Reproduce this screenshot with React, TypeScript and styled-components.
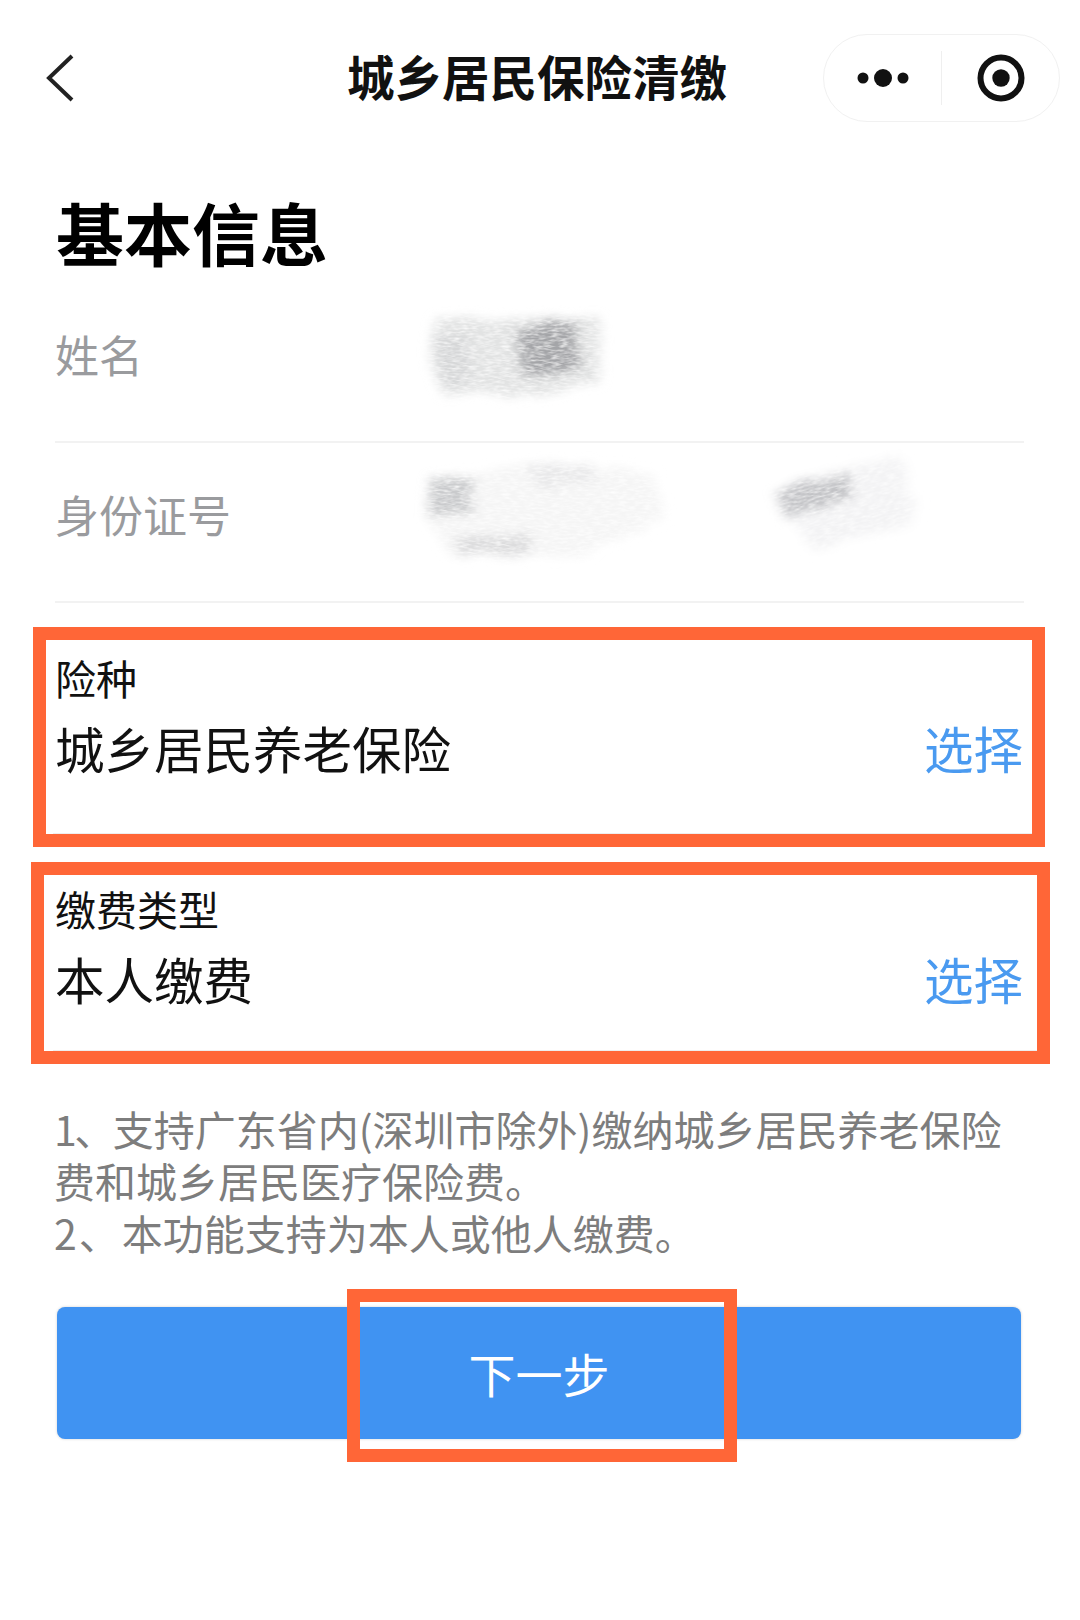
import styled, { createGlobalStyle } from 'styled-components';

const GlobalStyle = createGlobalStyle`
  html, body {
    margin: 0;
    padding: 0;
    background: #fff;
  }
  body {
    font-family: "Noto Sans CJK SC", "Liberation Sans", sans-serif;
  }
`;

const Page = styled.div`
  width: 1080px;
  height: 1620px;
  overflow: hidden;
  background: #fff;
`;

const NavBar = styled.header`
  height: 156px;
  padding: 0 20px 0 14px;
  display: grid;
  grid-template-columns: 1fr auto 1fr;
  align-items: center;
`;

const BackIcon = styled.svg`
  width: 30px;
  height: 48px;
  margin-left: 32px;
  display: block;
`;

const NavTitle = styled.h1`
  margin: 0 0 4px;
  font-size: 47.5px;
  line-height: 60px;
  font-weight: 700;
  color: #111;
`;

const Capsule = styled.div`
  justify-self: end;
  width: 237px;
  height: 88px;
  box-sizing: border-box;
  border: 1px solid #f1f1f1;
  border-radius: 44px;
  display: flex;
  align-items: center;
`;

const CapsuleSlot = styled.div`
  flex: 1;
  display: flex;
  justify-content: center;
  align-items: center;
`;

const CapsuleDivider = styled.div`
  width: 1px;
  height: 54px;
  background: #efefef;
`;

const SectionTitle = styled.h2`
  margin: 42px 0 17px 56px;
  font-size: 68px;
  line-height: 68px;
  font-weight: 700;
  color: #000;
`;

const InfoRow = styled.div`
  height: 160px;
  box-sizing: border-box;
  margin: 0 56px 0 55px;
  border-bottom: 2px solid #f2f2f2;
  display: grid;
  grid-template-columns: 372px 1fr;
  align-items: start;
`;

const InfoLabel = styled.div`
  margin-top: 49px;
  font-size: 44px;
  line-height: 44px;
  color: #9a9b9e;
`;

const Redacted = styled.svg<{ $top: number }>`
  display: block;
  margin-top: ${(p) => p.$top}px;
  overflow: visible;
`;

const Highlight = styled.section<{ $left: number; $width: number; $height: number; $top: number }>`
  box-sizing: border-box;
  margin: ${(p) => p.$top}px 0 0 ${(p) => p.$left}px;
  width: ${(p) => p.$width}px;
  height: ${(p) => p.$height}px;
  border: 13px solid #ff6637;
  background: #fff;
`;

const Field = styled.div<{ $inset: number; $right: number; $pad: number }>`
  box-sizing: border-box;
  height: 100%;
  margin-left: ${(p) => p.$inset}px;
  padding: ${(p) => p.$pad}px ${(p) => p.$right}px 0 2px;
  border-bottom: 1px solid #eeeeee;
`;

const FieldLabel = styled.div`
  font-size: 41px;
  line-height: 40px;
  color: #111;
`;

const FieldBody = styled.div`
  margin-top: 26px;
  display: flex;
  justify-content: space-between;
  font-size: 49.5px;
  line-height: 50px;
`;

const FieldValue = styled.span`
  color: #111;
`;

const SelectLink = styled.span`
  color: #4a9af0;
`;

const Notes = styled.div`
  margin: 38px 50px 0 54px;
  font-size: 41px;
  line-height: 52px;
  color: #7d7d7d;
`;

const ListMark = styled.span<{ $spacing: number }>`
  letter-spacing: ${(p) => p.$spacing}px;
`;

const NextButton = styled.button`
  position: relative;
  display: block;
  margin: 49px 0 0 57px;
  width: 964px;
  height: 132px;
  padding: 0;
  border: none;
  border-radius: 8px;
  background: #4093f2;
  box-shadow: 0 0 3px rgba(0, 0, 0, 0.18);
  color: #fff;
  font-family: inherit;
  font-size: 47px;
  line-height: 50px;
`;

const ButtonMark = styled.span`
  position: absolute;
  left: 290px;
  top: -18px;
  width: 390px;
  height: 173px;
  box-sizing: border-box;
  border: 13px solid #ff6637;
`;

const ScribbleFilters = () => (
  <svg width="0" height="0" style={{ position: 'absolute' }}>
    <defs>
      <filter id="pencil" x="-20%" y="-20%" width="140%" height="140%">
        <feTurbulence type="fractalNoise" baseFrequency="0.03 0.14" numOctaves="3" seed="4" result="warp" />
        <feDisplacementMap in="SourceGraphic" in2="warp" scale="16" result="shape" />
        <feGaussianBlur in="shape" stdDeviation="6 5" result="soft" />
        <feTurbulence type="fractalNoise" baseFrequency="0.12 0.5" numOctaves="2" seed="9" result="grain" />
        <feColorMatrix
          in="grain"
          type="matrix"
          values="0 0 0 0 0  0 0 0 0 0  0 0 0 0 0  0 0 0 1.5 0.05"
          result="grainAlpha"
        />
        <feComposite in="soft" in2="grainAlpha" operator="in" />
      </filter>
    </defs>
  </svg>
);

const App = () => (
  <Page>
    <GlobalStyle />
    <ScribbleFilters />
    <NavBar>
      <BackIcon viewBox="0 0 30 48">
        <polyline points="26,2 3,24 26,46" fill="none" stroke="#222" strokeWidth="4" />
      </BackIcon>
      <NavTitle>城乡居民保险清缴</NavTitle>
      <Capsule>
        <CapsuleSlot>
          <svg width="52" height="20" viewBox="0 0 52 20">
            <circle cx="6" cy="10" r="5.5" fill="#111" />
            <circle cx="26" cy="10" r="9" fill="#111" />
            <circle cx="46" cy="10" r="5.5" fill="#111" />
          </svg>
        </CapsuleSlot>
        <CapsuleDivider />
        <CapsuleSlot>
          <svg width="48" height="48" viewBox="0 0 48 48">
            <circle cx="24" cy="24" r="20.5" fill="none" stroke="#111" strokeWidth="6" />
            <circle cx="24" cy="24" r="8.7" fill="#111" />
          </svg>
        </CapsuleSlot>
      </Capsule>
    </NavBar>

    <SectionTitle>基本信息</SectionTitle>

    <InfoRow>
      <InfoLabel>姓名</InfoLabel>
      <Redacted $top={27} width="190" height="100" viewBox="0 0 190 100">
        <g filter="url(#pencil)">
          <polygon points="8,5 70,10 172,6 174,72 120,84 15,84 4,50" fill="#e2e3e3" />
          <polygon points="90,18 150,8 152,60 96,70" fill="#a4a5a8" />
          <polygon points="8,28 40,25 42,70 15,76" fill="#d6d7d8" />
        </g>
      </Redacted>
    </InfoRow>

    <InfoRow>
      <InfoLabel>身份证号</InfoLabel>
      <Redacted $top={15} width="500" height="110" viewBox="0 0 500 110">
        <g filter="url(#pencil)">
          <polygon points="4,18 100,6 225,14 238,60 150,98 25,100 0,60" fill="#f5f5f5" />
          <polygon points="4,18 46,20 44,54 2,60" fill="#c9cacc" />
          <polygon points="28,80 102,74 104,94 32,98" fill="#dcdcdd" />
          <polygon points="100,6 165,4 170,26 110,30" fill="#e9e9ea" />
        </g>
        <g transform="rotate(-14 420 50)">
          <g filter="url(#pencil)">
            <polygon points="362,14 482,8 486,78 376,84 364,45" fill="#f3f3f4" />
            <polygon points="352,16 428,14 428,42 358,46" fill="#c2c3c6" />
          </g>
        </g>
      </Redacted>
    </InfoRow>

    <Highlight $top={24} $left={33} $width={1012} $height={220}>
      <Field $inset={7} $right={9} $pad={17}>
        <FieldLabel>险种</FieldLabel>
        <FieldBody>
          <FieldValue>城乡居民养老保险</FieldValue>
          <SelectLink>选择</SelectLink>
        </FieldBody>
      </Field>
    </Highlight>

    <Highlight $top={15} $left={31} $width={1019} $height={202}>
      <Field $inset={9} $right={14} $pad={13}>
        <FieldLabel>缴费类型</FieldLabel>
        <FieldBody>
          <FieldValue>本人缴费</FieldValue>
          <SelectLink>选择</SelectLink>
        </FieldBody>
      </Field>
    </Highlight>

    <Notes>
      <div>
        <ListMark $spacing={-2.5}>1、</ListMark>支持广东省内(深圳市除外)缴纳城乡居民养老保险费和城乡居民医疗保险费。
      </div>
      <div>
        <ListMark $spacing={2}>2、</ListMark>本功能支持为本人或他人缴费。
      </div>
    </Notes>

    <NextButton type="button">
      下一步
      <ButtonMark />
    </NextButton>
  </Page>
);

export default App;
